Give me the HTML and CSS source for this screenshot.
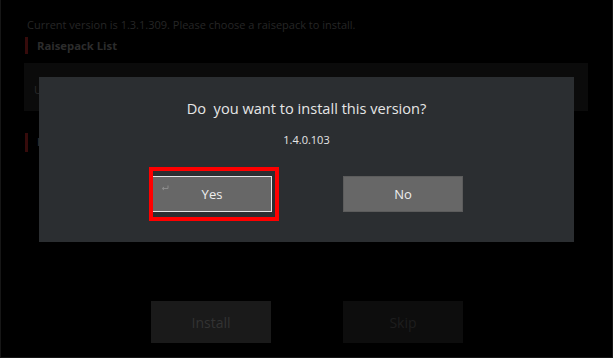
FILE: index.html
```html
<!DOCTYPE html>
<html lang="en">
<head>
  <meta charset="UTF-8">
  <meta name="viewport" content="width=device-width, initial-scale=1.0">
  <title>Raisepack Install</title>
  <link rel="stylesheet" href="styles.css">
</head>
<body>
  <div id="screen">
    <p class="current">Current version is 1.3.1.309. Please choose a raisepack to install.</p>
    <h2 class="section">Raisepack List</h2>
    <div class="list">
      <div class="list-item">Upgrade package 1.4.0.103</div>
    </div>
    <h2 class="section section-notes">Release Notes</h2>
    <div class="actions">
      <button class="btn btn-install">Install</button>
      <button class="btn btn-skip">Skip</button>
    </div>

    <div id="dialog">
      <p class="dialog-title">Do  you want to install this version?</p>
      <p class="dialog-version">1.4.0.103</p>
      <div class="dialog-actions">
        <button class="dbtn dbtn-yes">
          <svg class="enter" width="8" height="6" viewBox="0 0 8 6">
            <path d="M7 0.5 V3.5 H1.5 M3 2 L1.2 3.5 L3 5" fill="none" stroke="#8c8c8c" stroke-width="1"/>
          </svg>
          Yes
        </button>
        <button class="dbtn">No</button>
      </div>
    </div>
  </div>
</body>
</html>
```

FILE: styles.css
```css
body {
  margin: 0;
  background-color: #000;
  font-family: "Open Sans", "DejaVu Sans", sans-serif;
}

#screen {
  position: relative;
  width: 611px;
  height: 357px;
  border: 1px solid #161616;
  border-top: 0;
  padding: 0;
  box-sizing: content-box;
}

.current {
  margin: 0;
  padding: 17px 0 0 26px;
  font-size: 11px;
  line-height: 16px;
  color: #262626;
}

.section {
  margin: 4px 0 0 24px;
  padding-left: 9px;
  border-left: 3px solid #360b0b;
  font-size: 11.3px;
  line-height: 17px;
  font-weight: bold;
  color: #2c2c2c;
}

.list {
  margin: 9px 24px 0 23px;
  height: 48px;
  background-color: #0b0b0b;
  display: flex;
  align-items: center;
}

.list-item {
  padding: 4px 0 0 10px;
  font-size: 11px;
  color: #2a2a2a;
}

.section-notes {
  margin-top: 22px;
  height: 19px;
}

.actions {
  display: flex;
  justify-content: center;
  gap: 72px;
  margin-top: 149px;
  padding-left: 1px;
}

.btn {
  width: 120px;
  height: 42px;
  border: 0;
  font-family: inherit;
  font-size: 14px;
  padding: 0;
}

.btn-install {
  background-color: #1a1a1a;
  color: #333;
}

.btn-skip {
  background-color: #0d0d0d;
  color: #1e1e1e;
}

#dialog {
  position: absolute;
  left: 38px;
  top: 77px;
  width: 535px;
  height: 165px;
  background-color: #2b2e31;
  text-align: center;
  color: #e6e6e6;
}

.dialog-title {
  margin: 21px 0 0;
  font-size: 14.6px;
  line-height: 20px;
  white-space: pre;
}

.dialog-version {
  margin: 14px 0 0;
  font-size: 11px;
  line-height: 15px;
}

.dialog-actions {
  display: flex;
  justify-content: center;
  gap: 71px;
  margin-top: 29px;
  padding-left: 2px;
}

.dbtn {
  position: relative;
  width: 120px;
  height: 36px;
  padding: 0;
  background-color: #676767;
  border: 1px solid #5c5c5c;
  font-family: inherit;
  font-size: 13px;
  color: #eeeeee;
}

.dbtn-yes {
  border-color: #e4e4e4;
}

.dbtn-yes::after {
  content: "";
  position: absolute;
  left: -4px;
  top: -10px;
  right: -8px;
  bottom: -10px;
  border: 4px solid #ff0000;
}

.enter {
  position: absolute;
  left: 8px;
  top: 8px;
}
```
